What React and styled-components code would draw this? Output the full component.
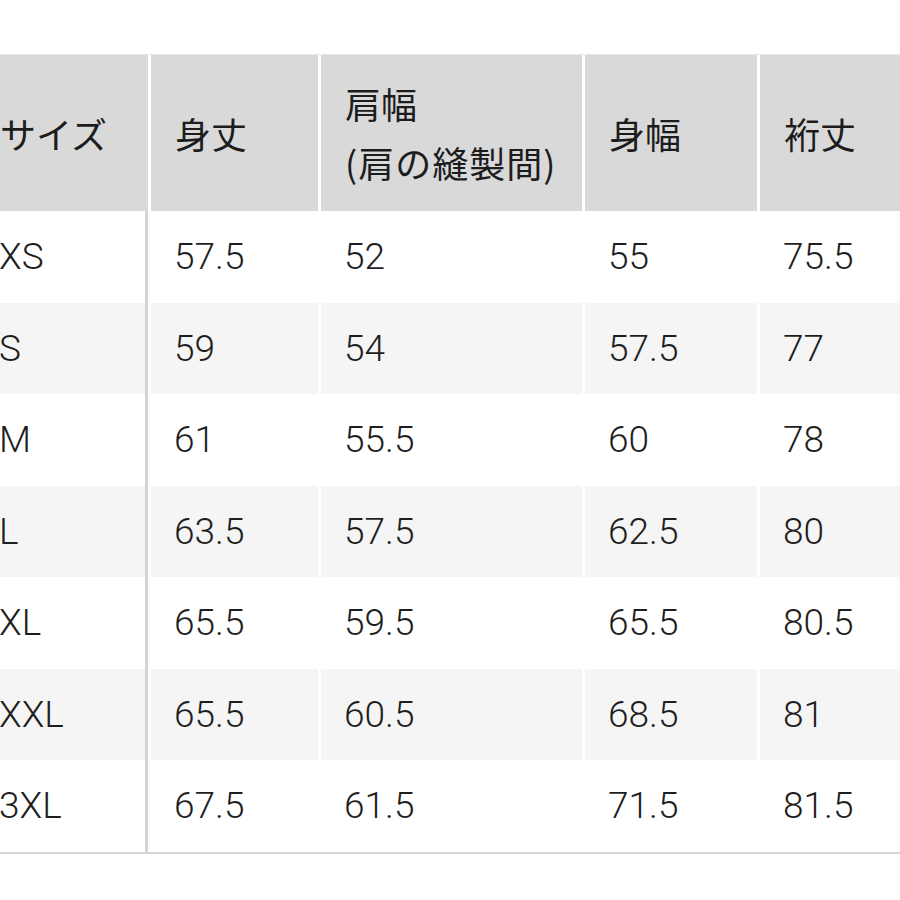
import React from 'react'
import styled, {createGlobalStyle} from 'styled-components'

const GlobalStyle = createGlobalStyle`
  html, body {
    margin: 0;
    padding: 0;
    background: #ffffff;
  }
`

const headers = [
  ['サイズ'],
  ['身丈'],
  ['肩幅', '(肩の縫製間)'],
  ['身幅'],
  ['裄丈'],
]

const rows = [
  ['XS', '57.5', '52', '55', '75.5'],
  ['S', '59', '54', '57.5', '77'],
  ['M', '61', '55.5', '60', '78'],
  ['L', '63.5', '57.5', '62.5', '80'],
  ['XL', '65.5', '59.5', '65.5', '80.5'],
  ['XXL', '65.5', '60.5', '68.5', '81'],
  ['3XL', '67.5', '61.5', '71.5', '81.5'],
]

export default function App() {
  return (
    <>
      <GlobalStyle />
      <Page>
        <Table>
          <HeadRow>
            {headers.map((lines, i) => (
              <HeadCell key={i}>
                {lines.map((l, j) => <span key={j}>{l}</span>)}
              </HeadCell>
            ))}
          </HeadRow>
          {rows.map((r, i) => (
            <Row key={r[0]}>
              {r.map((v, j) => (
                <Cell key={j} striped={i % 2 === 1} first={j === 0}>{v}</Cell>
              ))}
            </Row>
          ))}
        </Table>
      </Page>
    </>
  )
}

const Page = styled.div`
  width: 900px;
  height: 900px;
  overflow: hidden;
  padding-top: 54px;
  box-sizing: border-box;
`

const Table = styled.div`
  margin-left: -24px;
  width: 950px;
  border-top: 1px solid #e8e8e8;
  border-bottom: 2px solid #d6d6d6;
`

const HeadRow = styled.div`
  display: grid;
  grid-template-columns: 172px 167px 261px 172px 1fr;
  column-gap: 3px;
  height: 156px;
`

const Row = styled(HeadRow)`
  height: 91.5px;
`

const HeadCell = styled.div`
  background: #d9d9d9;
  display: flex;
  flex-direction: column;
  justify-content: center;
  padding-left: 24px;
  font-family: "Noto Sans CJK JP", "Noto Sans", sans-serif;
  font-size: 36px;
  line-height: 57px;
  color: #1c1c1c;
  span:nth-child(2) {
    letter-spacing: 1px;
    margin-top: 2px;
  }
`

const Cell = styled.div`
  background: ${p => (p.striped ? '#f5f5f5' : '#ffffff')};
  border-right: ${p => (p.first ? '3px solid #d4d4d4' : 'none')};
  display: flex;
  align-items: center;
  padding-left: 23px;
  font-family: Roboto, "Liberation Sans", sans-serif;
  font-weight: 300;
  font-size: 37px;
  color: #1e1e1e;
`
